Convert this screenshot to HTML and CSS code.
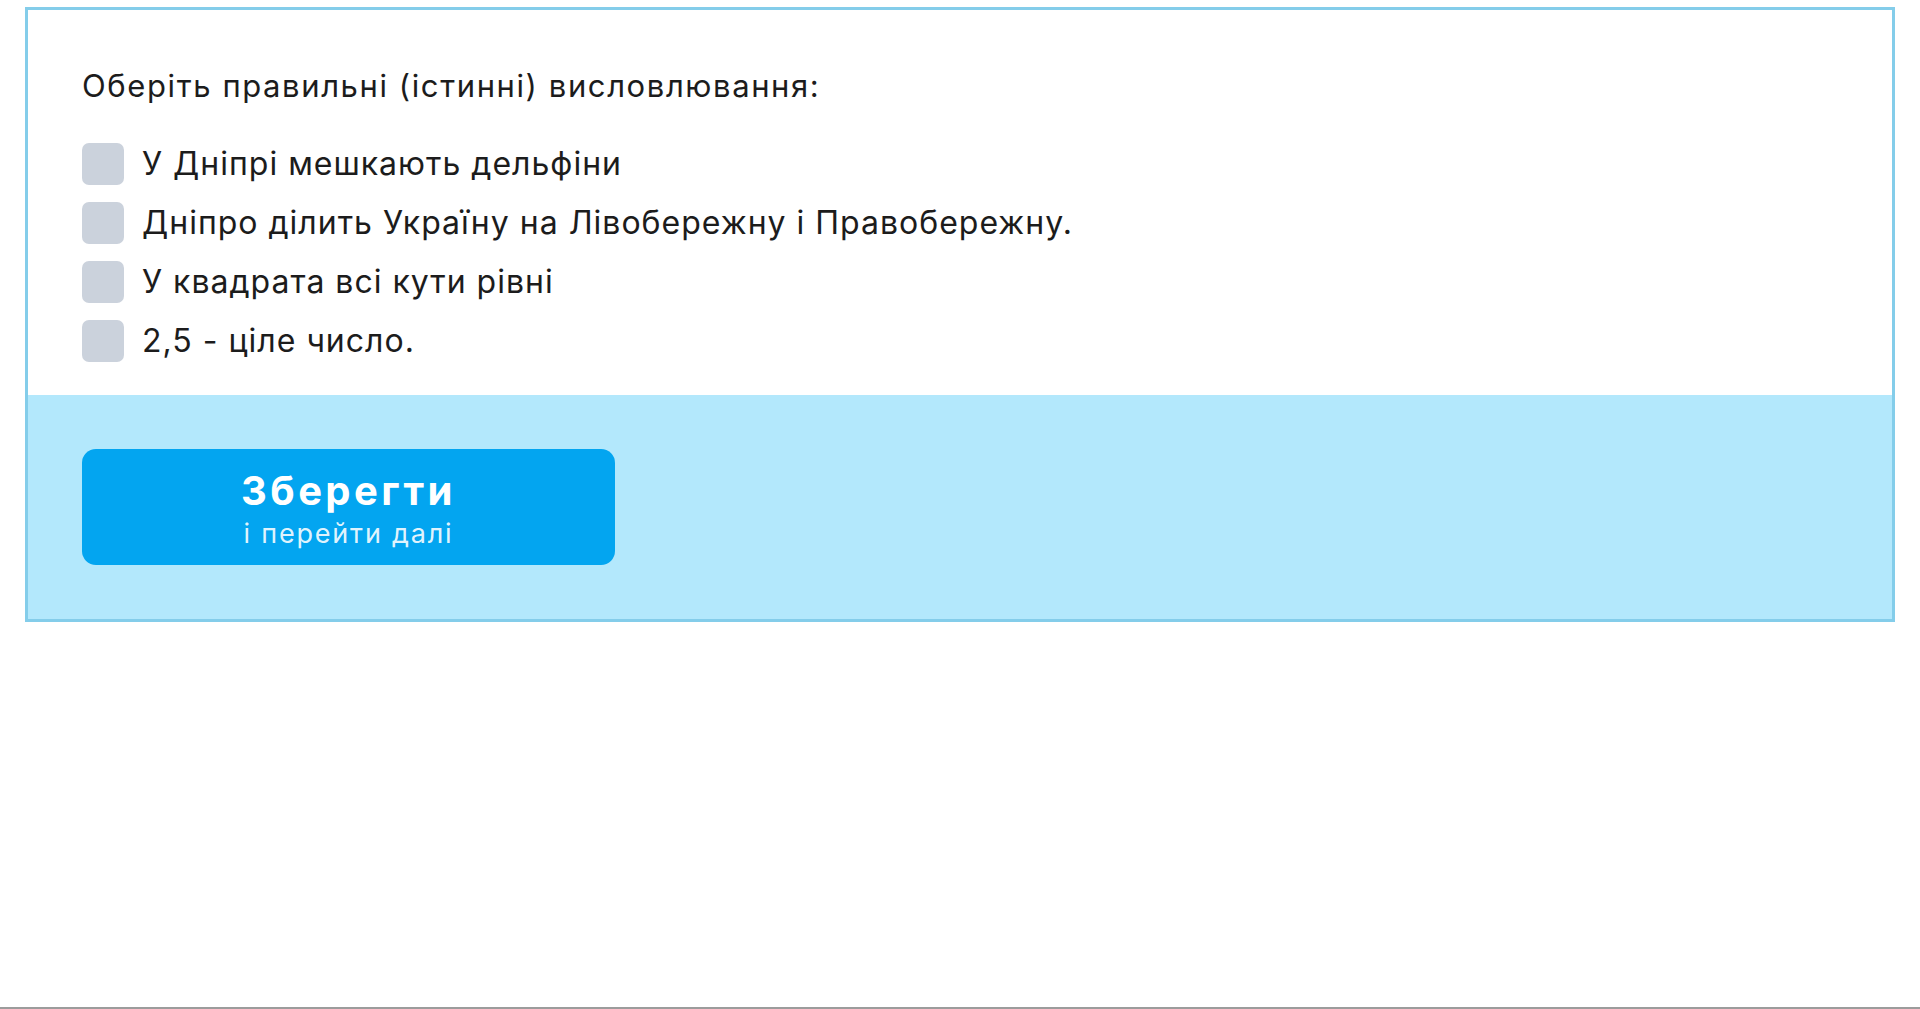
FILE: index.html
```html
<!DOCTYPE html>
<html lang="uk">
<head>
<meta charset="utf-8">
<title>Тест</title>
<link rel="stylesheet" href="styles.css">
</head>
<body>
<div class="page">
  <div class="card">
    <div class="body">
      <p class="question">Оберіть правильні (істинні) висловлювання:</p>
      <ul class="options">
        <li class="option"><span class="box"></span><span class="label">У Дніпрі мешкають дельфіни</span></li>
        <li class="option"><span class="box"></span><span class="label">Дніпро ділить Україну на Лівобережну і Правобережну.</span></li>
        <li class="option"><span class="box"></span><span class="label">У квадрата всі кути рівні</span></li>
        <li class="option"><span class="box"></span><span class="label">2,5 - ціле число.</span></li>
      </ul>
    </div>
    <div class="footer">
      <button class="save" type="button">
        <span class="save-title">Зберегти</span>
        <span class="save-sub">і перейти далі</span>
      </button>
    </div>
  </div>
</div>
</body>
</html>
```

FILE: styles.css
```css
* { box-sizing: border-box; }
html, body { margin: 0; padding: 0; }
body {
  font-family: Inter, "Noto Sans", sans-serif;
  color: #1c1c1c;
  background: #fff;
}
.page {
  min-height: 100vh;
  padding: 7px 25px 0 25px;
  border-bottom: 2px solid #9c9c9c;
}
.card {
  border: 3px solid #84cdea;
  display: flex;
  flex-direction: column;
}
.body {
  background: #fff;
  padding: 58px 54px 33px;
}
.question {
  margin: 0;
  font-size: 31px;
  line-height: 36px;
  letter-spacing: 1.6px;
}
.options {
  list-style: none;
  margin: 39px 0 0;
  padding: 0;
  display: flex;
  flex-direction: column;
  gap: 17px;
}
.option {
  display: flex;
  align-items: center;
  gap: 18px;
  height: 42px;
}
.box {
  width: 42px;
  height: 42px;
  border-radius: 7px;
  background: #cbd2dc;
  flex: none;
}
.label {
  font-size: 32px;
  line-height: 42px;
  letter-spacing: 1px;
}
.footer {
  background: #b3e8fc;
  height: 224px;
  padding: 54px 54px;
}
.save {
  width: 533px;
  height: 116px;
  border: none;
  border-radius: 14px;
  background: #03a5f0;
  color: #fff;
  font-family: inherit;
  display: flex;
  flex-direction: column;
  align-items: center;
  justify-content: center;
  padding: 6px 0 0;
}
.save-title {
  font-size: 40px;
  font-weight: 700;
  line-height: 46px;
  letter-spacing: 3.4px;
}
.save-sub {
  margin-top: 2px;
  font-size: 27px;
  line-height: 36px;
  letter-spacing: 1.8px;
  color: rgba(255,255,255,0.9);
}
```
